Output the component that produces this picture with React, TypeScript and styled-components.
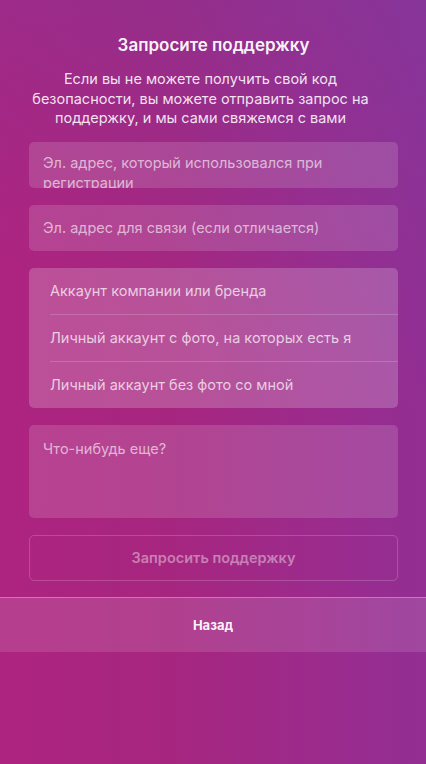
import React from "react"
import styled, { createGlobalStyle } from "styled-components"

const GlobalStyles = createGlobalStyle`
  html, body {
    margin: 0;
    padding: 0;
    height: 100%;
  }
  body {
    font-family: Inter, "Noto Sans", sans-serif;
    -webkit-font-smoothing: antialiased;
  }
`

const Screen = styled.div`
  width: 426px;
  height: 764px;
  overflow: hidden;
  color: #fff;
  background:
    linear-gradient(200deg, rgba(120, 60, 160, 0.45) 0%, rgba(120, 60, 160, 0) 45%),
    linear-gradient(90deg, #ad2480 0%, #a6267f 40%, #9a2c8e 80%, #932e93 100%);
  display: flex;
  flex-direction: column;
`

const Content = styled.div`
  padding: 34px 28px 0 29px;
  display: flex;
  flex-direction: column;
`

const Title = styled.h1`
  margin: 0;
  font-size: 17px;
  font-weight: 600;
  text-align: center;
  line-height: 22px;
  color: rgba(255, 255, 255, 0.95);
`

const Lead = styled.p`
  margin: 13px 0 0;
  padding-right: 26px;
  font-size: 14.5px;
  line-height: 19.5px;
  text-align: center;
  white-space: nowrap;
  color: rgba(255, 255, 255, 0.88);
`

const Field = styled.div<{ $tall?: boolean }>`
  margin-top: 17px;
  height: ${(p) => (p.$tall ? "93px" : "46px")};
  border-radius: 5px;
  background: rgba(255, 255, 255, 0.14);
  overflow: hidden;
  box-sizing: border-box;
  padding: ${(p) => (p.$tall ? "14px 14px" : "13px 14px")};
  font-size: 14.5px;
  line-height: 20px;
  color: rgba(255, 255, 255, 0.62);
`

const FirstField = styled(Field)`
  margin-top: 14px;
  padding-top: 11px;
`

const Options = styled.div`
  margin-top: 17px;
  border-radius: 5px;
  background: rgba(255, 255, 255, 0.2);
  padding-left: 21px;
  display: flex;
  flex-direction: column;
`

const Option = styled.div<{ $last?: boolean }>`
  height: 46px;
  display: flex;
  align-items: center;
  font-size: 14.5px;
  color: rgba(255, 255, 255, 0.72);
  border-bottom: ${(p) => (p.$last ? "none" : "1px solid rgba(255, 255, 255, 0.18)")};
`

const SubmitButton = styled.button`
  margin-top: 17px;
  height: 46px;
  border-radius: 5px;
  border: 1px solid rgba(255, 255, 255, 0.18);
  background: transparent;
  font-family: inherit;
  font-size: 14.5px;
  font-weight: 600;
  color: rgba(255, 255, 255, 0.42);
`

const Footer = styled.div`
  margin-top: 16px;
  height: 54px;
  border-top: 1px solid rgba(255, 255, 255, 0.3);
  background: rgba(255, 255, 255, 0.12);
  display: flex;
  align-items: center;
  justify-content: center;
  font-size: 13px;
  font-weight: 700;
  color: rgba(255, 255, 255, 0.95);
`

function App() {
  return (
    <>
      <GlobalStyles />
      <Screen>
        <Content>
          <Title>Запросите поддержку</Title>
          <Lead>
            Если вы не можете получить свой код
            <br />
            безопасности, вы можете отправить запрос на
            <br />
            поддержку, и мы сами свяжемся с вами
          </Lead>
          <FirstField>Эл. адрес, который использовался при регистрации</FirstField>
          <Field>Эл. адрес для связи (если отличается)</Field>
          <Options>
            <Option>Аккаунт компании или бренда</Option>
            <Option>Личный аккаунт с фото, на которых есть я</Option>
            <Option $last>Личный аккаунт без фото со мной</Option>
          </Options>
          <Field $tall>Что-нибудь еще?</Field>
          <SubmitButton>Запросить поддержку</SubmitButton>
        </Content>
        <Footer>Назад</Footer>
      </Screen>
    </>
  )
}

export default App
